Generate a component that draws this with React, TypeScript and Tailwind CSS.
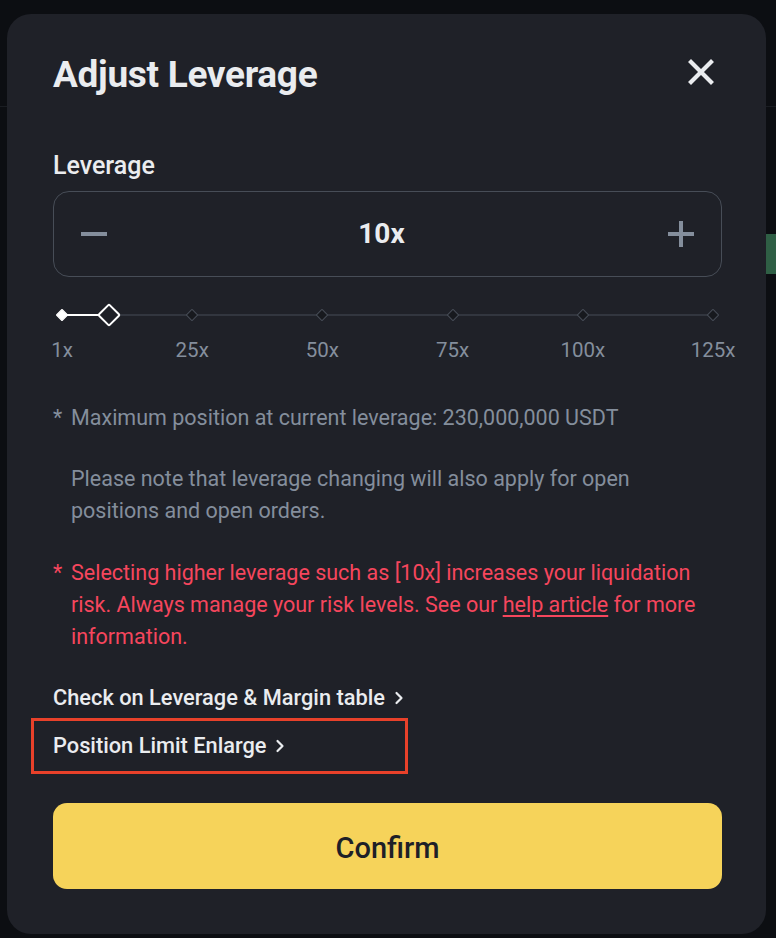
import { useState } from 'react';

const marks = [1, 25, 50, 75, 100, 125];

function Diamond({ active, big }: { active?: boolean; big?: boolean }) {
  if (big) {
    return <div className="h-[17px] w-[17px] rotate-45 rounded-[2px] border-2 border-white bg-[#1e2027]" />;
  }
  return (
    <div
      className={`h-[9px] w-[9px] rotate-45 rounded-[1px] border ${
        active ? 'border-white bg-white' : 'border-[#474d57] bg-[#17191e]'
      }`}
    />
  );
}

function Chevron() {
  return (
    <svg width="10" height="14" viewBox="0 0 10 14" fill="none" className="ml-[9px]">
      <path d="M2.5 2l5 5-5 5" stroke="#eaecef" strokeWidth="2.2" strokeLinecap="round" strokeLinejoin="round" />
    </svg>
  );
}

export default function App() {
  const [lev] = useState(10);
  // where the thumb sits on the 1x..125x track
  const pct = ((lev - 1) / 124) * 100;

  return (
    <div className="relative h-[938px] w-[776px] overflow-hidden bg-[#0c0e12] pl-[7px] pt-[14px] font-['Roboto',sans-serif]">
      {/* bits of the page behind the modal */}
      <div className="absolute left-0 top-[106px] h-px w-[776px] bg-[#1a1d22]" />
      <div className="absolute right-0 top-[234px] h-[40px] w-[10px] bg-[#2f5f45]" />

      <div className="relative z-10 h-[920px] w-[759px] rounded-[24px] bg-[#1f2128] pl-[46px] pr-[44px] pt-[39px]">
        <div className="flex h-[44px] items-center justify-between">
          <h2 className="text-[37px] font-bold leading-[44px] tracking-[-0.3px] text-[#eaecef]">Adjust Leverage</h2>
          <svg width="26" height="26" viewBox="0 0 26 26" className="mb-[6px] mr-[8px]">
            <path d="M3 3l20 20M23 3L3 23" stroke="#eaecef" strokeWidth="4.2" strokeLinecap="square" />
          </svg>
        </div>

        <div className="mt-[53px] text-[25px] font-medium leading-[32px] text-[#eaecef]">Leverage</div>

        <div className="mt-[9px] flex h-[86px] items-center justify-between rounded-[16px] border border-[#474d57] px-[26px]">
          <svg width="28" height="28" viewBox="0 0 28 28">
            <path d="M1 14h26" stroke="#848e9c" strokeWidth="4" />
          </svg>
          <span className="mr-[12px] text-[28px] font-bold text-[#eaecef]">{lev}x</span>
          <svg width="28" height="28" viewBox="0 0 28 28">
            <path d="M1 14h26M14 1v26" stroke="#848e9c" strokeWidth="4" />
          </svg>
        </div>

        {/* slider */}
        <div className="relative mx-[9px] mt-[27px] h-[22px]">
          <div className="absolute left-0 right-0 top-1/2 h-px -translate-y-1/2 bg-[#474d57]" />
          <div className="absolute left-0 top-1/2 h-[2px] -translate-y-1/2 bg-white" style={{ width: `${pct}%` }} />
          {marks.map((m, i) => (
            <div
              key={m}
              className="absolute top-1/2 -translate-x-1/2 -translate-y-1/2"
              style={{ left: `${(i / (marks.length - 1)) * 100}%` }}
            >
              <Diamond active={m <= lev} />
            </div>
          ))}
          <div className="absolute top-1/2 -translate-x-1/2 -translate-y-1/2" style={{ left: `${pct}%` }}>
            <Diamond big />
          </div>
        </div>
        <div className="relative mx-[9px] mt-[12px] h-[24px]">
          {marks.map((m, i) => (
            <span
              key={m}
              className="absolute top-0 -translate-x-1/2 whitespace-nowrap text-[20.5px] leading-[24px] text-[#848e9c]"
              style={{ left: `${(i / (marks.length - 1)) * 100}%` }}
            >
              {m}x
            </span>
          ))}
        </div>

        <div className="mt-[40px] text-[21.5px] leading-[32px] text-[#848e9c]">
          <div className="flex">
            <span className="w-[18px] shrink-0">*</span>
            <p>Maximum position at current leverage: 230,000,000 USDT</p>
          </div>
          <p className="mt-[29px] pl-[18px]">
            Please note that leverage changing will also apply for open positions and open orders.
          </p>
          <div className="mt-[30px] flex text-[#f6465d]">
            <span className="w-[18px] shrink-0">*</span>
            <p>
              Selecting higher leverage such as [{lev}x] increases your liquidation risk. Always manage your risk levels.
              See our <span className="underline underline-offset-[3px]">help article</span> for more information.
            </p>
          </div>
        </div>

        <div className="mt-[29px] flex items-center text-[21.8px] font-medium leading-[32px] text-[#eaecef]">
          Check on Leverage &amp; Margin table
          <Chevron />
        </div>
        <div className="relative mt-[16px] flex items-center text-[21.8px] font-medium leading-[32px] text-[#eaecef]">
          Position Limit Enlarge
          <Chevron />
          <div className="absolute left-[-22px] top-[-12px] h-[56px] w-[377px] border-[3px] border-[#e8412a]" />
        </div>

        <button className="mt-[41px] flex h-[86px] w-full items-center justify-center rounded-[14px] bg-[#f6d35a] pt-[6px] text-[29px] font-medium text-[#1e2027]">
          Confirm
        </button>
      </div>
    </div>
  );
}
